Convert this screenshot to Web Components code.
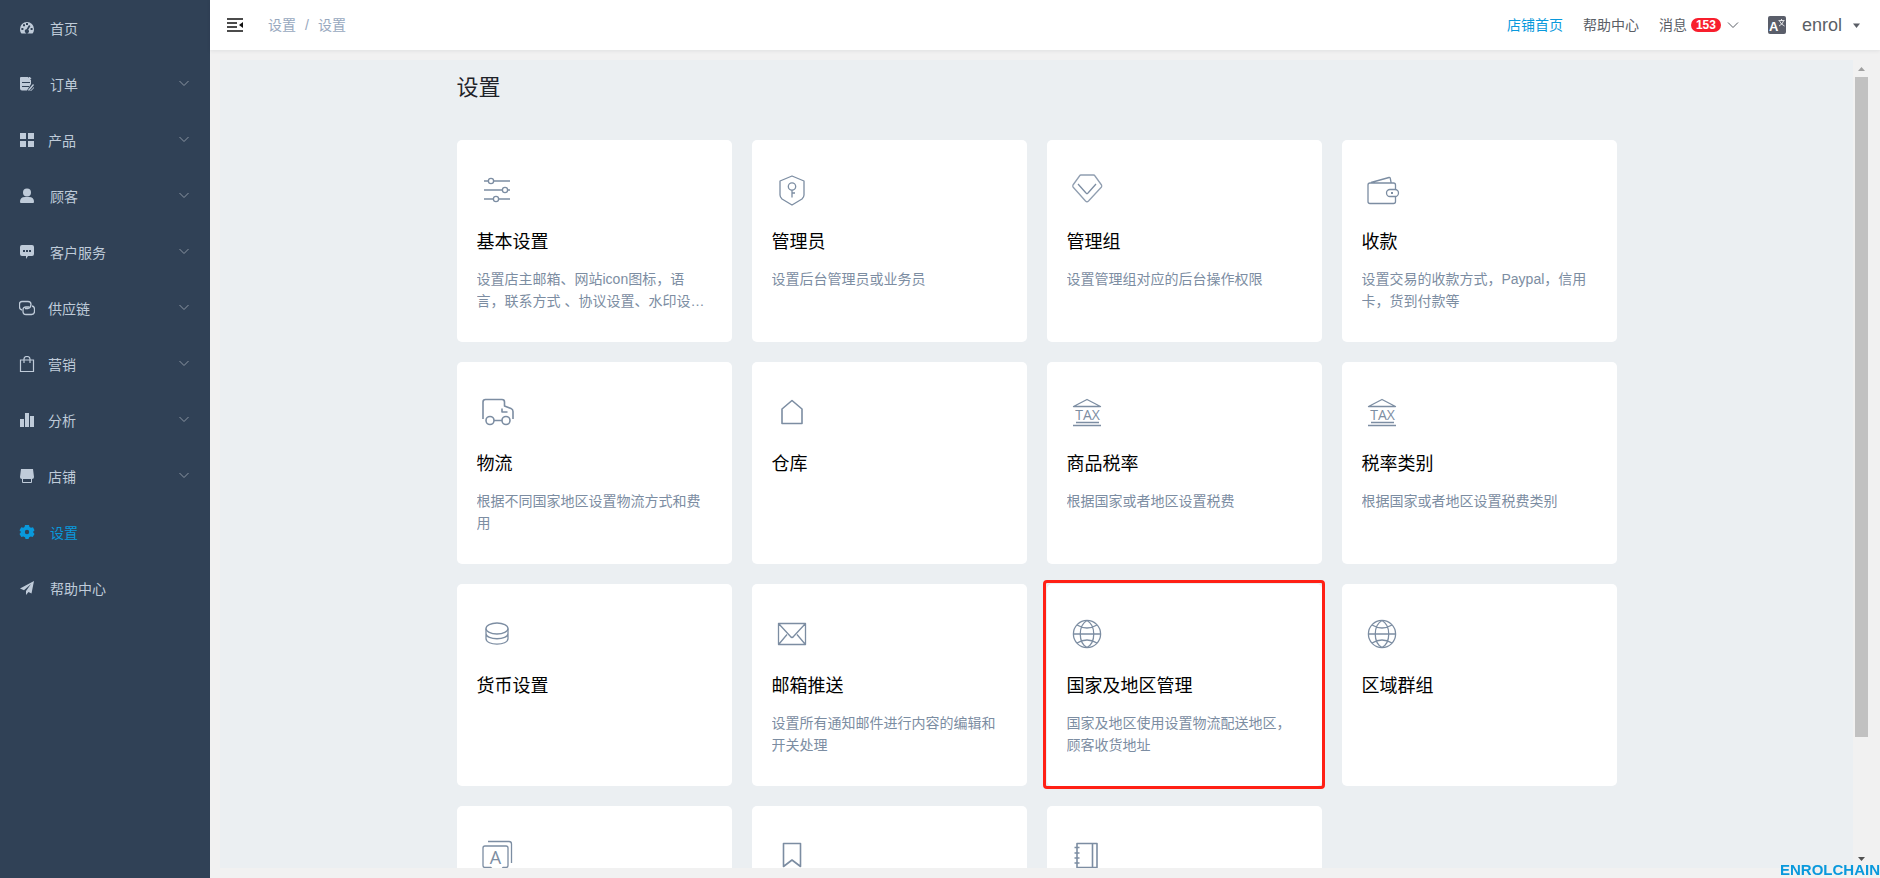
<!DOCTYPE html>
<html lang="zh-CN">
<head>
<meta charset="utf-8">
<meta name="viewport" content="width=device-width, initial-scale=1">
<title>设置</title>
<style>
  html, body { margin: 0; height: 100%; }
  body {
    font-family: "Liberation Sans", "Noto Sans CJK SC", sans-serif;
    font-size: 14px;
    color: #000;
    background: #f1f1f1;
    overflow: hidden;
    --blue: #0999dc;
    --ink: #5a5e66;
    --muted: #7c8da2;
  }
</style>
</head>
<body>
<admin-shell>
  <side-nav slot="nav">
    <nav-item icon="gauge">首页</nav-item>
    <nav-item icon="order" group>订单</nav-item>
    <nav-item icon="grid" group compact>产品</nav-item>
    <nav-item icon="user" group>顾客</nav-item>
    <nav-item icon="chat" group>客户服务</nav-item>
    <nav-item icon="chain" group compact>供应链</nav-item>
    <nav-item icon="bag" group compact>营销</nav-item>
    <nav-item icon="bars" group compact>分析</nav-item>
    <nav-item icon="store" group compact>店铺</nav-item>
    <nav-item icon="gear" active>设置</nav-item>
    <nav-item icon="plane">帮助中心</nav-item>
  </side-nav>
  <top-bar slot="header"></top-bar>
  <scroll-panel slot="content">
    <settings-grid heading="设置">
      <setting-card icon="sliders" heading="基本设置">设置店主邮箱、网站icon图标，语言，联系方式 、协议设置、水印设置等</setting-card>
      <setting-card icon="shield" heading="管理员">设置后台管理员或业务员</setting-card>
      <setting-card icon="diamond" heading="管理组">设置管理组对应的后台操作权限</setting-card>
      <setting-card icon="wallet" heading="收款">设置交易的收款方式，Paypal，信用卡，货到付款等</setting-card>
      <setting-card icon="truck" heading="物流">根据不同国家地区设置物流方式和费用</setting-card>
      <setting-card icon="house" heading="仓库"></setting-card>
      <setting-card icon="tax" heading="商品税率">根据国家或者地区设置税费</setting-card>
      <setting-card icon="tax" heading="税率类别">根据国家或者地区设置税费类别</setting-card>
      <setting-card icon="coins" heading="货币设置"></setting-card>
      <setting-card icon="mail" heading="邮箱推送">设置所有通知邮件进行内容的编辑和开关处理</setting-card>
      <setting-card icon="globe" heading="国家及地区管理" marked>国家及地区使用设置物流配送地区，顾客收货地址</setting-card>
      <setting-card icon="globe" heading="区域群组"></setting-card>
      <setting-card icon="language"></setting-card>
      <setting-card icon="bookmark"></setting-card>
      <setting-card icon="notebook"></setting-card>
    </settings-grid>
  </scroll-panel>
</admin-shell>

<script>
const svg = (size, body, attrs = '') =>
  `<svg viewBox="0 0 ${size} ${size}" width="${size}" height="${size}" aria-hidden="true" ${attrs}>${body}</svg>`;

/* 16-unit glyphs of the side menu */
const NAV_ICONS = {
  gauge: '<path fill="currentColor" fill-rule="evenodd" d="M1 9a7 7 0 0 1 14 0c0 2-.6 3.500-1.500 4.500h-11C1.600 12.500 1 11 1 9Zm6-6v2h2V3Zm-3 1.200v2h2v-2ZM2.400 8v2h2V8Zm9.200 0v2h2V8ZM10 5 7.500 9.300a2 2 0 1 0 1.700.5L11.500 6Z"/>',
  order: '<path fill="currentColor" fill-rule="evenodd" d="M2 1h7l3 3v4l-4 6.500H3q-2 0-2-2V2q0-1 1-1Zm1 5v1h8V6Zm0 4v1h7v-1Z"/><path fill="currentColor" d="M10 1h1l1.500 2H10Zm4 7 1 1-5 6-1-1Zm1 3v1l-3 3h-1Z"/>',
  grid: '<path fill="currentColor" d="M1 1h6v6H1Zm8 0h6v6H9ZM1 9h6v6H1Zm8 0h6v6H9Z"/>',
  user: '<circle cx="8" cy="4.500" r="4" fill="currentColor"/><path fill="currentColor" d="M1 14q0-5 5-5h4q5 0 5 5 0 1-1 1H2q-1 0-1-1Z"/>',
  chat: '<path fill="currentColor" fill-rule="evenodd" d="M3 1h10q2 0 2 2v7q0 2-2 2H9l-2 3v-3H3q-2 0-2-2V3q0-2 2-2Zm1 5v2h2V6Zm3 0v2h2V6Zm3 0v2h2V6Z"/>',
  chain: '<g fill="none" stroke="currentColor" stroke-width="1.300"><path d="M3 10Q.5 9.500.5 7V4Q.5 1.500 3 1.500h6Q12 1.500 12 4.500t-3 4H6"/><path d="M13 6q2.500.5 2.500 3v2.500q0 3-3 3H7q-3 0-3-3V10q0-3 3-3h3.500"/></g>',
  bag: '<path fill="none" stroke="currentColor" stroke-width="1.200" d="M1.500 4h13v11.500h-13ZM5 7V3q0-2.500 3-2.500T11 3v4"/>',
  bars: '<path fill="currentColor" d="M1 7h4v8H1Zm5-6h4v14H6Zm5 3h4v11h-4Z"/>',
  store: '<path fill="currentColor" d="M2 1h12l1 8q0 2-2 2H3q-2 0-2-2Z"/><path fill="none" stroke="currentColor" d="M3.500 11v3.500h9V11"/>',
  gear: '<path fill="currentColor" fill-rule="evenodd" d="M6 1h4l.5 2 1.500.8 2-.6 1.500 3L14 8l1.500 2-1.800 3-2-.5-1.500.8L9.500 15h-3L6 13.300l-1.700-.8-2 .5-1.800-3L2 8 .5 6.200l1.800-3 2 .6 1.200-.8Zm2 4.800a2.200 2.200 0 1 0 0 4.400 2.200 2.200 0 0 0 0-4.400Z"/>',
  plane: '<path fill="currentColor" d="M15 1 1 8.500l4 1.700L12 4l-5 7v4l2.500-3 3 1.500Z"/>'
};

/* 40-unit line glyphs of the setting cards */
const CARD_ICONS = {
  sliders: '<path d="M7 11h4M17 11h16M7 20h18M31 20h2M7 29h9M22 29h11"/><circle cx="14" cy="11" r="2.600"/><circle cx="28" cy="20" r="2.600"/><circle cx="19" cy="29" r="2.600"/>',
  shield: '<path d="M20 6 32 11v14q0 2-2 4l-10 6-10-6q-2-2-2-4V11Z"/><circle cx="20" cy="16.500" r="3.700"/><path d="M20 20v7.500M20 23h3"/>',
  diamond: '<path opacity=".85" d="M14 5h12.500q1 0 1.500 1L34.500 15q.5 1 0 2L21.500 31q-1.500 1.500-3 0L6 17q-.5-1 0-2l6.500-9q.5-1 1.500-1Z"/><path d="m11 14 8 9q1 1.500 2 0l8-9"/>',
  wallet: '<path d="M33.500 19v-4q0-2-2-2H8q-2 0-2 2v16.500q0 2 2 2h23.500q2 0 2-2V27M9 12.500l18-5q1-.3 1.300 1l.9 4.500"/><rect x="24.500" y="19.500" width="12" height="7" rx="3.500"/><path stroke-width="2" d="M29 23h2"/>',
  truck: '<path stroke-width="1.600" d="M6 27V10q0-2.500 2.500-2.500h16.500q2.500 0 2.500 2.500v4l6.500 2.500q2 .8 2 3V27M25 16.500V20h5.500M17 28.500h8"/><circle cx="13" cy="28.500" r="4" stroke-width="1.600"/><circle cx="29" cy="28.500" r="4" stroke-width="1.600"/>',
  house: '<path stroke-width="1.600" d="M20 8.500 30 17v14.500H10V17Z"/>',
  tax: '<path d="M20 7.500 33.500 14.500H6.500ZM9 30.500h23M6 33.500h28"/><text x="20.500" y="28" text-anchor="middle" font-family="Open Sans, sans-serif" font-size="14" stroke="none" fill="currentColor">TAX</text>',
  coins: '<ellipse cx="20" cy="14.500" rx="11" ry="5.500"/><path d="M9 14.500v5c0 7 22 7 22 0v-5M9 19.500v5c0 7.500 22 7.500 22 0v-5"/>',
  mail: '<path d="M6.500 9.500h27v21h-27ZM7 10l11.500 12.500q1.500 2 3 0L33 10M7 30l8-9.500M33 30l-8-9.500"/>',
  globe: '<circle cx="20" cy="20" r="13.600"/><path d="M6.500 20h27M20 6.500c-9 5-9 22 0 27M20 6.500c9 5 9 22 0 27M10 11q10 6 20 0M10 29q10-6 20 0"/>',
  language: '<path d="M11 5.500h21q2.500 0 2.500 2.500V27M14 31.500H8q-2 0-2-2V12q0-2 2-2h21q2 0 2 2v17.500q0 2-2 2h-3l-2.500 3h-7L14 31.500"/><text x="18.500" y="27.500" text-anchor="middle" font-family="Open Sans, sans-serif" font-size="18" stroke="none" fill="currentColor">A</text>',
  bookmark: '<path stroke-width="1.600" d="M11.500 7.500h17v23L20 24l-8.500 6.500Z"/>',
  notebook: '<path stroke-width="1.600" d="M10 7.500h20v24H10ZM25.500 8v23M7.500 11.500h5M7.500 17h5M7.500 22h5M7.500 27h5"/>'
};

class View extends HTMLElement {
  connectedCallback() {
    if (this.shadowRoot) return;
    this.attachShadow({ mode: 'open' }).innerHTML = this.render();
  }
}

customElements.define('admin-shell', class extends View {
  render() {
    return `<style>
      :host { display: flex; height: 100vh; }
      aside { flex: 0 0 210px; background: #304156; overflow: hidden; }
      .page { flex: 1; min-width: 0; display: flex; flex-direction: column; }
      main { flex: 1; min-height: 0; padding: 10px; display: flex; }
      .brand {
        position: fixed; right: 0; bottom: 0;
        font-size: 15px; line-height: 16px; font-weight: bold; color: var(--blue);
      }
    </style>
    <aside><slot name="nav"></slot></aside>
    <div class="page">
      <slot name="header"></slot>
      <main><slot name="content"></slot></main>
    </div>
    <div class="brand">ENROLCHAIN</div>`;
  }
});

customElements.define('side-nav', class extends View {
  render() {
    return `<style>:host { display: block; } nav { display: flex; flex-direction: column; }</style>
    <nav><slot></slot></nav>`;
  }
});

customElements.define('nav-item', class extends View {
  render() {
    const group = this.hasAttribute('group');
    return `<style>
      :host { display: block; color: #bfcbd9; }
      :host([active]) { color: var(--blue); }
      a {
        display: flex; align-items: center; height: 56px; padding: 0 20px 0 19px;
        color: inherit; text-decoration: none; line-height: 20px;
      }
      .icon { flex: none; margin-right: 15px; }
      :host([compact]) .icon { margin-right: 13px; }
      .label { flex: 1; padding-top: 2px; }
      .arrow { color: #8b95a2; }
    </style>
    <a href="#">${svg(16, NAV_ICONS[this.getAttribute('icon')], 'class="icon"')}
      <span class="label"><slot></slot></span>
      ${group ? svg(12, '<path fill="none" stroke="currentColor" d="m1.500 3 4.500 4.500L10.500 3"/>', 'class="arrow"') : ''}
    </a>`;
  }
});

customElements.define('top-bar', class extends View {
  render() {
    return `<style>
      :host {
        display: flex; align-items: center; height: 50px; background: #fff;
        box-shadow: 0 1px 4px rgba(0, 21, 41, .08);
        padding: 0 19px 0 17px; box-sizing: border-box; position: relative;
        color: var(--ink); line-height: 20px; flex: none;
      }
      a, button { color: inherit; text-decoration: none; font: inherit; }
      button { border: 0; padding: 0; background: none; display: flex; align-items: center; }
      .menu { color: #111; }
      .crumbs { display: flex; gap: 9px; margin-left: 25px; color: #97a8be; }
      .links { margin-left: auto; display: flex; align-items: center; gap: 20px; }
      .current { color: var(--blue); }
      .badge {
        background: #f81f2d; color: #fff; font-size: 12px; font-weight: bold;
        line-height: 14px; border-radius: 7px; padding: 0 5px; margin: 0 6px 0 4px;
      }
      .lang { margin-left: 29px; }
      .user { margin-left: 16px; font-size: 18px; gap: 9px; }
    </style>
    <button class="menu" aria-label="菜单">${svg(16, '<path fill="none" stroke="currentColor" stroke-width="1.400" d="M0 2h16M0 6h10M0 10h10M0 14h16"/><path fill="currentColor" d="M16 5v6l-4-3Z"/>')}</button>
    <nav class="crumbs"><a href="#">设置</a><span>/</span><a href="#">设置</a></nav>
    <div class="links">
      <a class="current" href="#">店铺首页</a>
      <a href="#">帮助中心</a>
      <button>消息<span class="badge">153</span>${svg(12, '<path fill="none" stroke="currentColor" d="m1 3.500 5 5 5-5"/>')}</button>
    </div>
    <button class="lang" aria-label="语言">${svg(18, '<rect width="18" height="18" rx="2" fill="#5a5e6a"/><text x="1" y="14.500" font-size="13" font-weight="bold" fill="#fff">A</text><path fill="none" stroke="#fff" stroke-width=".8" d="M13.500 3v1.500M10.500 4.500h6M15.500 5q-1 3.500-4.500 5M11.500 5q1.500 3.500 5 5"/>')}</button>
    <button class="user">enrol${svg(10, '<path fill="currentColor" d="M2 3.500h7L5.500 8Z"/>')}</button>`;
  }
});

customElements.define('scroll-panel', class extends View {
  render() {
    return `<style>
      :host { flex: 1; min-width: 0; display: flex; background: #ebeff2; }
      .view { flex: 1; min-width: 0; overflow-y: auto; scrollbar-width: none; }
      .bar {
        flex: 0 0 17px; box-sizing: border-box; padding: 0 2px;
        display: grid; grid-template-rows: 17px 1fr 17px; background: #f1f1f1;
      }
      .bar svg { display: block; width: 13px; height: 17px; }
      .track { display: flex; }
      .thumb { flex: 1; height: 85.3%; background: #c1c1c1; }
    </style>
    <div class="view"><slot></slot></div>
    <div class="bar" aria-hidden="true">
      <svg viewBox="0 0 13 17"><path fill="#a0a0a0" d="M3 11h7L6.500 7Z"/></svg>
      <div class="track"><div class="thumb"></div></div>
      <svg viewBox="0 0 13 17"><path fill="#505050" d="M3 6h7l-3.500 4Z"/></svg>
    </div>`;
  }
});

customElements.define('settings-grid', class extends View {
  render() {
    return `<style>
      :host { display: block; max-width: 1160px; margin: 0 auto; }
      h1 {
        margin: 0 0 36px; padding-top: 12px;
        font-size: 22px; line-height: 32px; font-weight: normal; color: #1f2329;
      }
      .cards { display: grid; grid-template-columns: repeat(auto-fill, minmax(275px, 1fr)); gap: 20px; }
    </style>
    <h1>${this.getAttribute('heading')}</h1>
    <div class="cards"><slot></slot></div>`;
  }
});

customElements.define('setting-card', class extends View {
  render() {
    const heading = this.getAttribute('heading');
    return `<style>
      :host { display: block; position: relative; min-height: 202px; background: #fff; border-radius: 5px; }
      :host([marked])::after {
        content: ""; position: absolute; inset: -4px -3px -3px -4px;
        border: 3px solid #ff2015; border-radius: 4px; pointer-events: none;
      }
      a { display: block; padding: 30px 20px 20px; color: inherit; text-decoration: none; }
      svg { display: block; color: var(--muted); }
      h2 { margin: 19px 0 0; font-size: 18px; line-height: 26px; font-weight: normal; color: #000; }
      p {
        margin: 13px 0 0; line-height: 22px; color: var(--muted);
        display: -webkit-box; -webkit-box-orient: vertical; -webkit-line-clamp: 2; overflow: hidden;
      }
    </style>
    <a href="#">
      ${svg(40, CARD_ICONS[this.getAttribute('icon')], 'fill="none" stroke="currentColor" stroke-width="1.300" stroke-linejoin="round"')}
      ${heading ? `<h2>${heading}</h2>` : ''}
      <p><slot></slot></p>
    </a>`;
  }
});
</script>
</body>
</html>
